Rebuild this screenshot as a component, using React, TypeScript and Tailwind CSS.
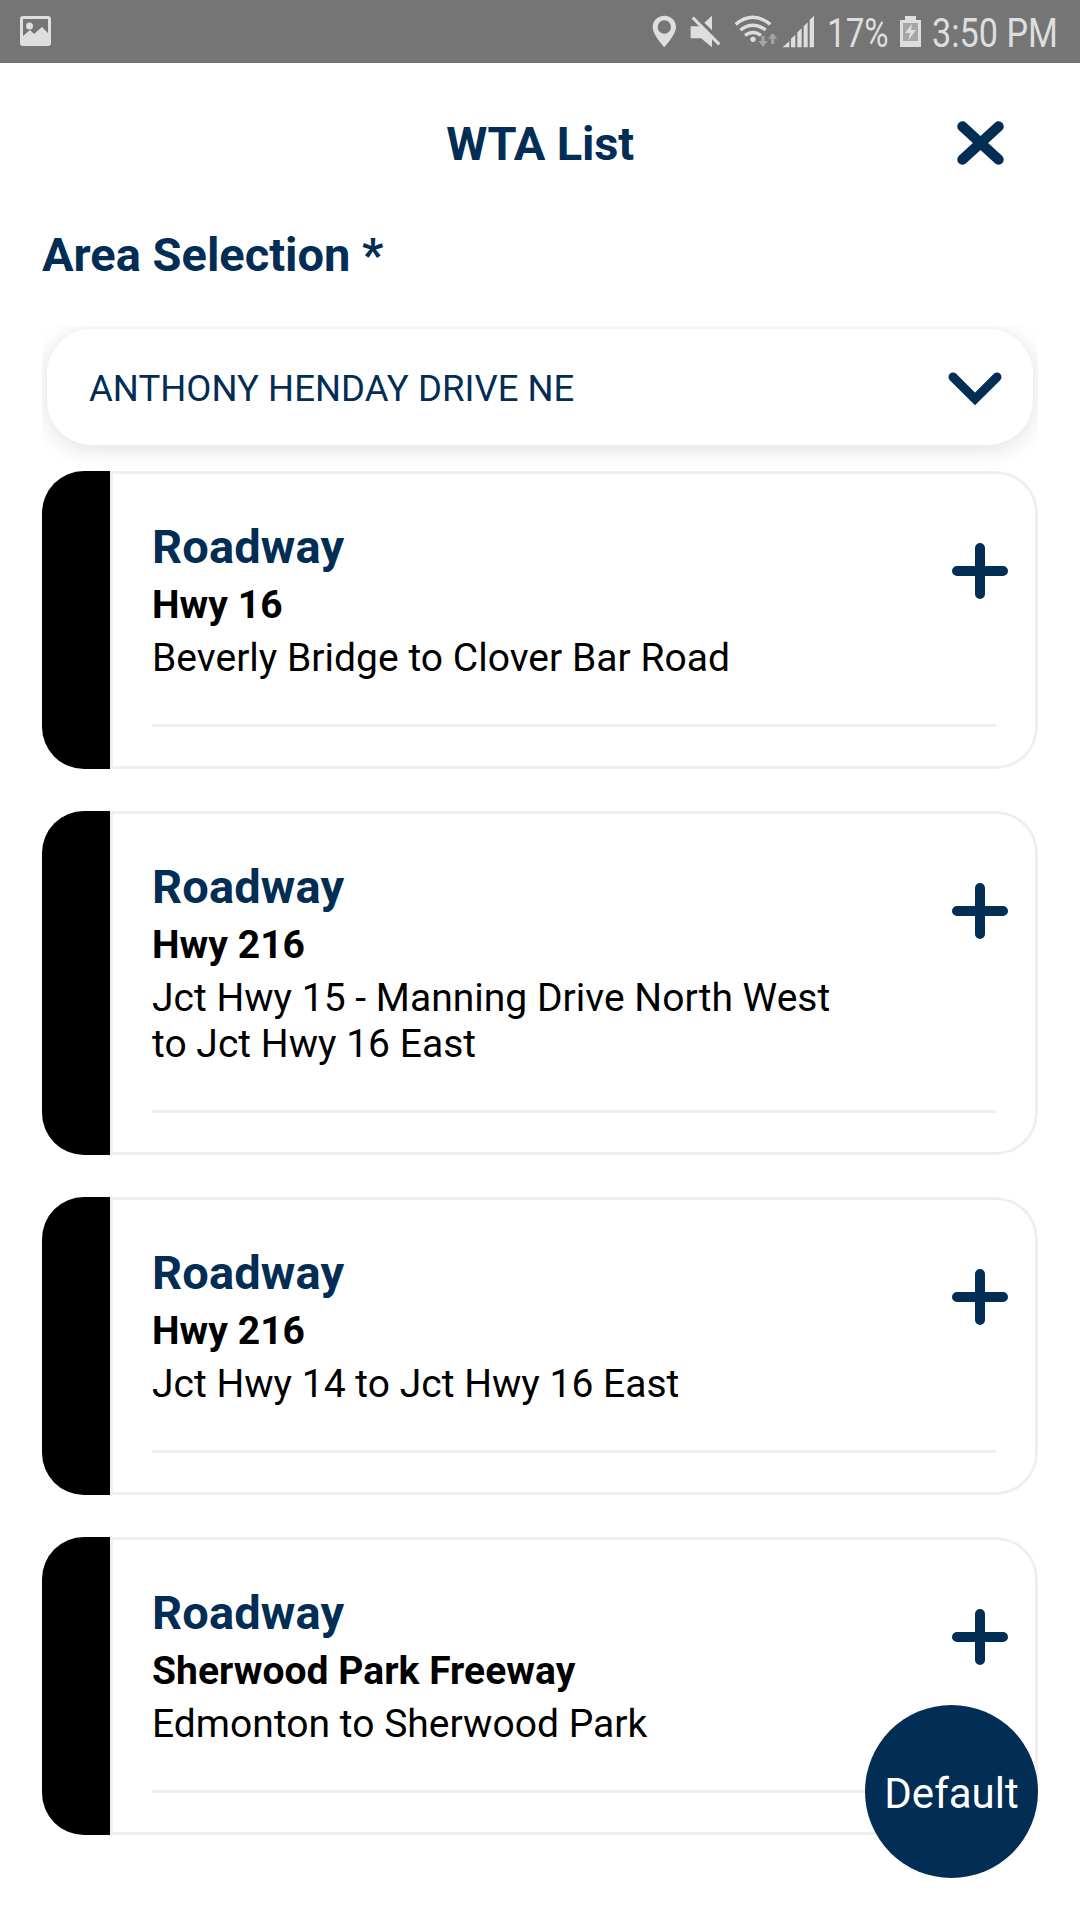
const roadways = [
  { road: 'Hwy 16', section: 'Beverly Bridge to Clover Bar Road' },
  { road: 'Hwy 216', section: 'Jct Hwy 15 - Manning Drive North West to Jct Hwy 16 East' },
  { road: 'Hwy 216', section: 'Jct Hwy 14 to Jct Hwy 16 East' },
  { road: 'Sherwood Park Freeway', section: 'Edmonton to Sherwood Park' },
]

function StatusBar() {
  return (
    <div className="flex h-[63px] items-center bg-[#757575] pl-5 text-[#dedede]">
      <svg width="31" height="31" viewBox="0 0 31 31" fill="currentColor">
        <path fillRule="evenodd" d="M3 0h25a3 3 0 0 1 3 3v24a3 3 0 0 1-3 3H3a3 3 0 0 1-3-3V3a3 3 0 0 1 3-3zm0 3v17l7-6 4 4 8-7 6 6V3z" />
        <circle cx="9.5" cy="10" r="3.5" />
      </svg>

      {/* location, mute, wifi, signal */}
      <svg className="ml-[601px]" width="163" height="63" viewBox="36 0 489 189" fill="currentColor">
        <path fillRule="evenodd" d="M73 47c-20 0-35 15-35 35 0 22 35 60 35 60s35-38 35-60c0-20-15-35-35-35zm0 14a20 20 0 1 1 0 40 20 20 0 0 1 0-40z" />
        <path d="M152 79h34l30 30v33l-33-27h-31zM216 47v44l-23-23z" />
        <path d="M158 53l80 80" stroke="currentColor" strokeWidth="9" />
        <g fill="none" stroke="currentColor" strokeWidth="10">
          <path d="M287 73q52-42 104 0M301 90q38-29 76 0M315 106q24-17 48 0" />
        </g>
        <circle cx="339" cy="118" r="8" />
        <g fill="#a3a3a3">
          <path d="M364 108h10v15h10l-15 18-14-18h9zM393 132h10v-16h9l-14-18-14 18h9z" />
        </g>
        <path d="M428 142l20-19v19zM453 142v-26l13-12v38zM472 142V97l13-12v57zM491 142V79l12-12v75zM509 142V60l13-13v95z" />
      </svg>

      <span className="mt-[5px] ml-[12px] w-[63px] origin-left scale-x-[0.83] text-[40px] leading-none whitespace-nowrap">17%</span>
      <svg className="ml-[10px]" width="21" height="31" viewBox="0 0 21 31" fill="currentColor">
        <path d="M5 0h11v4h5v27H0V4h5z" />
        <path d="M3 7h15v18H3z" fill="#a6a6a6" />
        <path d="M12 8L5 17h5l-2 8 8-11h-5z" />
      </svg>
      <span className="mt-[5px] ml-[11px] origin-left scale-x-[0.855] text-[40px] leading-none whitespace-nowrap">3:50 PM</span>
    </div>
  )
}

function PlusIcon() {
  return (
    <svg className="mt-[69px] mr-[27px] shrink-0" width="56" height="56" viewBox="0 0 56 56" fill="none" stroke="#022d54" strokeWidth="10" strokeLinecap="round">
      <path d="M28 5v46M5 28h46" />
    </svg>
  )
}

function RoadwayCard({ road, section }: { road: string; section: string }) {
  return (
    <div className="flex overflow-hidden rounded-[42px]">
      <div className="w-[68px] shrink-0 bg-black" />
      <div className="flex-1 rounded-r-[42px] border-3 border-[#efefef] pb-[39px]">
        <div className="flex items-start justify-between">
          <div className="w-[720px] pt-[44px] pl-[39px]">
            <h2 className="text-[47px] leading-[57px] font-bold tracking-[0.15px] text-[#022d54]">Roadway</h2>
            <p className="pt-px text-[39px] leading-[58px] font-bold tracking-[0.05px]">{road}</p>
            <p className="pt-px text-[39px] leading-[46px] tracking-[0.02px]">{section}</p>
          </div>
          <PlusIcon />
        </div>
        <div className="mt-[43px] mr-[39px] ml-[39px] h-[3px] bg-[#efefef]" />
      </div>
    </div>
  )
}

export default function App() {
  return (
    <div className="relative h-[1920px] w-[1080px] overflow-hidden bg-white font-['Roboto',sans-serif] text-black">
      <StatusBar />

      <header className="relative flex h-[160px] items-center justify-center">
        <h1 className="pt-[3px] text-[47px] font-bold tracking-[-0.2px] text-[#022d54]">WTA List</h1>
        <svg className="absolute top-[58px] right-[76px]" width="47" height="44" viewBox="0 0 47 44" fill="none" stroke="#022d54" strokeWidth="10.5" strokeLinecap="round">
          <path d="M5.5 5.5l36 33M41.5 5.5l-36 33" />
        </svg>
      </header>

      <main className="px-[42px]">
        <h2 className="h-[103px] pt-[3px] text-[47px] leading-[57px] font-bold text-[#022d54]">Area Selection *</h2>

        {/* the shadow is cut off at the edges of the wrapper */}
        <div className="h-[145px] overflow-hidden px-[5px] pt-[3px]">
          <div className="flex h-[116px] items-center justify-between rounded-[45px] bg-white pt-[3px] pr-[31px] pl-[42px] shadow-[0_4px_24px_rgba(0,0,0,0.13)]">
            <span className="pt-[2px] text-[36.5px] tracking-[0.04px] text-[#022d54]">ANTHONY HENDAY DRIVE NE</span>
            <svg width="54" height="34" viewBox="0 0 54 34" fill="none" stroke="#022d54" strokeWidth="9" strokeLinecap="round">
              <path d="M5 5l22 22L49 5" />
            </svg>
          </div>
        </div>

        <div className="flex flex-col gap-[42px]">
          {roadways.map((r, i) => (
            <RoadwayCard key={i} road={r.road} section={r.section} />
          ))}
        </div>
      </main>

      <button className="absolute top-[1705px] left-[865px] flex size-[173px] items-center justify-center rounded-full bg-[#022d54] pt-[3px] text-[42px] text-white">
        Default
      </button>
    </div>
  )
}
